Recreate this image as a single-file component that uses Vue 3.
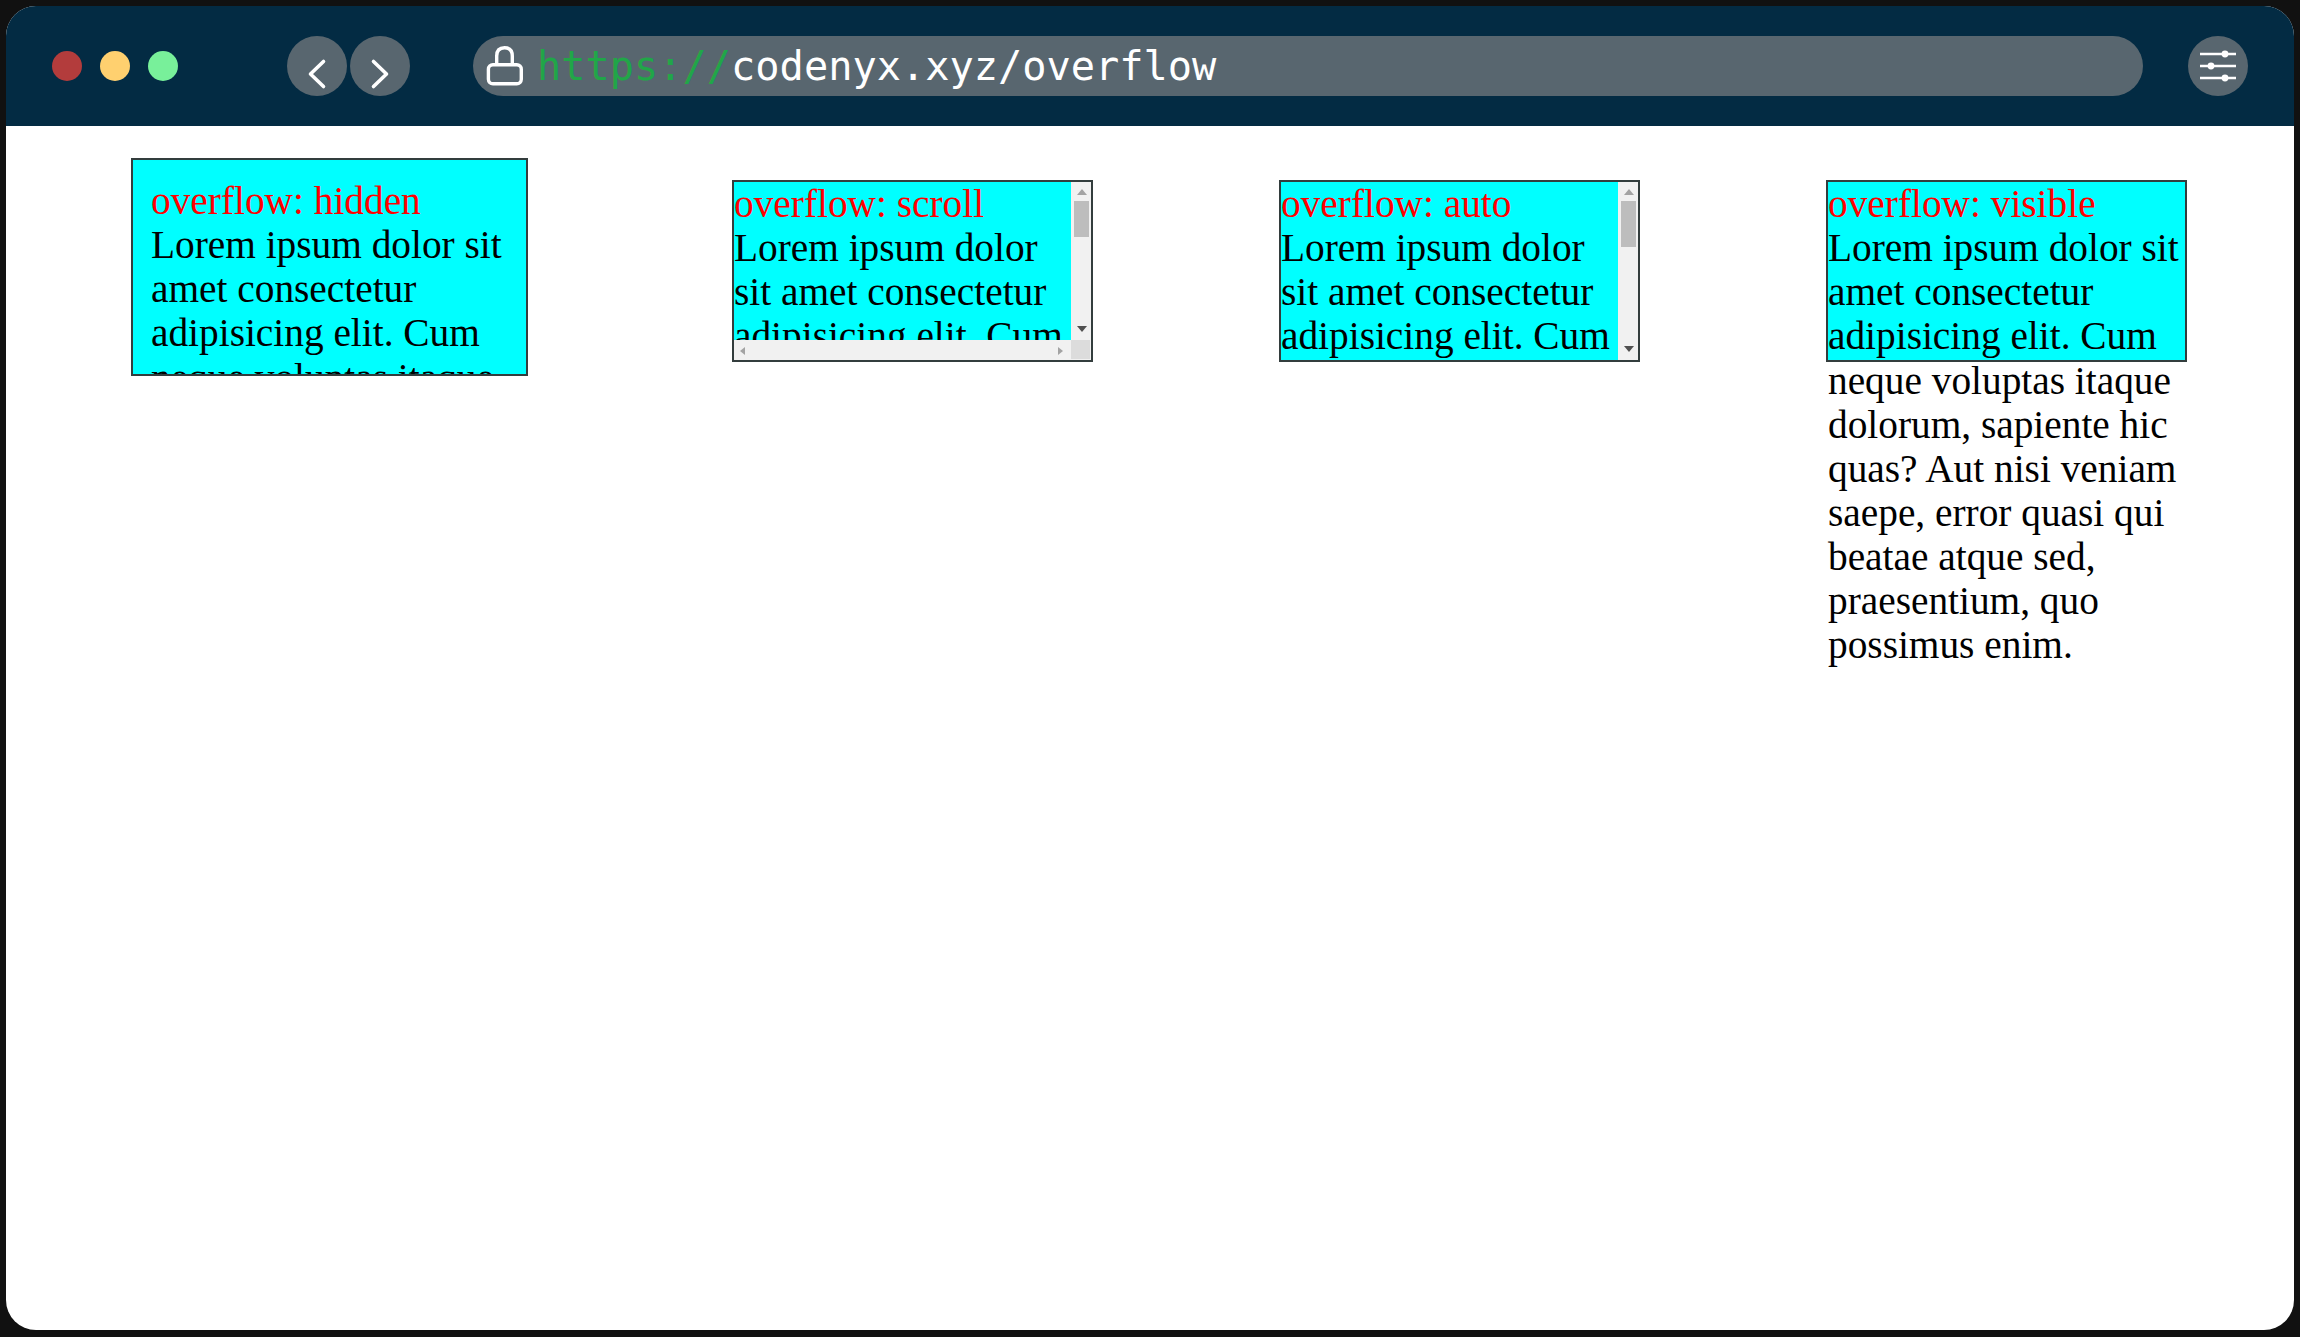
<script setup>
const lorem = 'Lorem ipsum dolor sit amet consectetur adipisicing elit. Cum neque voluptas itaque dolorum, sapiente hic quas? Aut nisi veniam saepe, error quasi qui beatae atque sed, praesentium, quo possimus enim.'
const boxes = [
  { mode: 'hidden', vbar: false, hbar: false },
  { mode: 'scroll', vbar: true, hbar: true },
  { mode: 'auto', vbar: true, hbar: false },
  { mode: 'visible', vbar: false, hbar: false }
]
</script>

<template>
  <div class="window">
    <header class="bar">
      <div class="dots">
        <span class="dot red"></span>
        <span class="dot yellow"></span>
        <span class="dot green"></span>
      </div>
      <div class="nav">
        <span class="round">
          <svg width="60" height="60" viewBox="0 0 60 60" fill="none" stroke="#fff" stroke-width="3.6" stroke-linecap="round" stroke-linejoin="round">
            <path d="M36.5 25.5 L23.5 38 L36.5 50.5" />
          </svg>
        </span>
        <span class="round">
          <svg width="60" height="60" viewBox="0 0 60 60" fill="none" stroke="#fff" stroke-width="3.6" stroke-linecap="round" stroke-linejoin="round">
            <path d="M23.5 25.5 L36.5 38 L23.5 50.5" />
          </svg>
        </span>
      </div>
      <div class="url">
        <svg class="lock" width="38" height="42" viewBox="0 0 38 42" fill="none" stroke="#fff" stroke-width="3.4">
          <rect x="2.4" y="19.7" width="32.900" height="19.100" rx="4.500" />
          <path d="M10.7 19.7 V11 C10.7 5.200 14 2.700 18.500 2.700 C23 2.700 26.300 5.200 26.300 11 V19.700" />
        </svg>
        <span class="addr"><span class="scheme">https://</span>codenyx.xyz/overflow</span>
      </div>
      <span class="round settings">
        <svg width="60" height="60" viewBox="0 0 60 60" fill="none" stroke="#fff" stroke-width="2.6">
          <path d="M12 18 H48 M12 30 H48 M12 42 H48" />
          <g fill="#fff" stroke="none">
            <circle cx="37" cy="18" r="3.4" />
            <circle cx="23" cy="30" r="3.4" />
            <circle cx="37" cy="42" r="3.4" />
          </g>
        </svg>
      </span>
    </header>
    <main class="page">
      <div v-for="b in boxes" :key="b.mode" class="box" :class="b.mode">
        <div class="pane">
          <span class="title">overflow: {{ b.mode }}</span>
          {{ lorem }}
        </div>
        <div v-if="b.vbar" class="vbar">
          <span class="arrow up"></span>
          <span class="thumb"></span>
          <span class="arrow down"></span>
        </div>
        <div v-if="b.hbar" class="hbar">
          <span class="arrow left"></span>
          <span class="arrow right"></span>
        </div>
        <div v-if="b.hbar" class="corner"></div>
      </div>
    </main>
  </div>
</template>

<style>
html, body {
  margin: 0;
  background: #111111;
}
</style>

<style scoped>
.window {
  width: 2288px;
  height: 1324px;
  margin: 6px 6px 0;
  background: #fff;
  border-radius: 30px;
  overflow: hidden;
}
.bar {
  height: 120px;
  background: #032b43;
  display: flex;
  align-items: flex-start;
  padding-top: 30px;
  box-sizing: border-box;
}
.dots {
  display: flex;
  gap: 18px;
  margin: 15px 0 0 46px;
}
.dot {
  width: 30px;
  height: 30px;
  border-radius: 50%;
}
.red { background: #b33c3c; }
.yellow { background: #ffd06f; }
.green { background: #78f09a; }
.nav {
  display: flex;
  gap: 3px;
  margin-left: 109px;
}
.round {
  width: 60px;
  height: 60px;
  border-radius: 50%;
  background: #58666f;
  display: block;
}
.round svg { display: block; }
.url {
  width: 1670px;
  height: 60px;
  margin-left: 63px;
  border-radius: 30px;
  background: #58666f;
  display: flex;
  align-items: flex-start;
  padding-left: 13px;
  box-sizing: border-box;
}
.lock {
  margin-top: 9px;
  flex: none;
}
.addr {
  margin: 1px 0 0 13px;
  font-family: "DejaVu Sans Mono", monospace;
  font-size: 40.3px;
  line-height: 60px;
  color: #fff;
  white-space: nowrap;
}
.scheme { color: #21a648; }
.settings { margin-left: 45px; }

.page {
  display: flex;
  align-items: flex-start;
  padding-left: 125px;
}
.box {
  box-sizing: border-box;
  width: 361px;
  height: 182px;
  margin-top: 54px;
  margin-left: 186px;
  flex: none;
  border: 2px solid #333d3d;
  font-family: "Liberation Serif", "Times New Roman", serif;
  font-size: 39.35px;
  line-height: 44.12px;
  color: #000;
  background: #00ffff;
}
.pane { min-width: 0; min-height: 0; }
.title {
  display: block;
  color: #f00;
}
.hidden {
  width: 397px;
  height: 218px;
  margin-top: 32px;
  margin-left: 0;
  overflow: hidden;
}
.hidden .pane { padding: 19px 18px; }
.scroll {
  margin-left: 204px;
  display: grid;
  grid-template-columns: 1fr 20px;
  grid-template-rows: 1fr 20px;
}
.auto {
  display: grid;
  grid-template-columns: 1fr 20px;
  grid-template-rows: 1fr;
}
.scroll .pane, .auto .pane {
  overflow: hidden;
}
.vbar {
  background: #f1f1f1;
  display: flex;
  flex-direction: column;
  align-items: flex-start;
  padding-top: 7px;
  padding-bottom: 8px;
  box-sizing: border-box;
}
.thumb {
  display: block;
  width: 15px;
  height: 36px;
  margin: 6px 0 0 3px;
  background: #bdbdbd;
}
.auto .thumb { height: 46px; }
.hbar {
  background: #f1f1f1;
  display: flex;
  align-items: flex-start;
  padding: 7px 8px 0 6px;
  box-sizing: border-box;
}
.corner {
  background: #dcdcdc;
  border-right: 1px solid #f1f1f1;
  border-bottom: 1px solid #f1f1f1;
  box-sizing: border-box;
}
.arrow {
  display: block;
  width: 0;
  height: 0;
  flex: none;
}
.up {
  margin-left: 6px;
  border-left: 5px solid transparent;
  border-right: 5px solid transparent;
  border-bottom: 6px solid #a3a3a3;
}
.down {
  margin: auto 0 0 6px;
  border-left: 5px solid transparent;
  border-right: 5px solid transparent;
  border-top: 6px solid #505050;
}
.left {
  border-top: 4px solid transparent;
  border-bottom: 4px solid transparent;
  border-right: 5px solid #a3a3a3;
}
.right {
  margin-left: auto;
  border-top: 4px solid transparent;
  border-bottom: 4px solid transparent;
  border-left: 5px solid #a3a3a3;
}
</style>
